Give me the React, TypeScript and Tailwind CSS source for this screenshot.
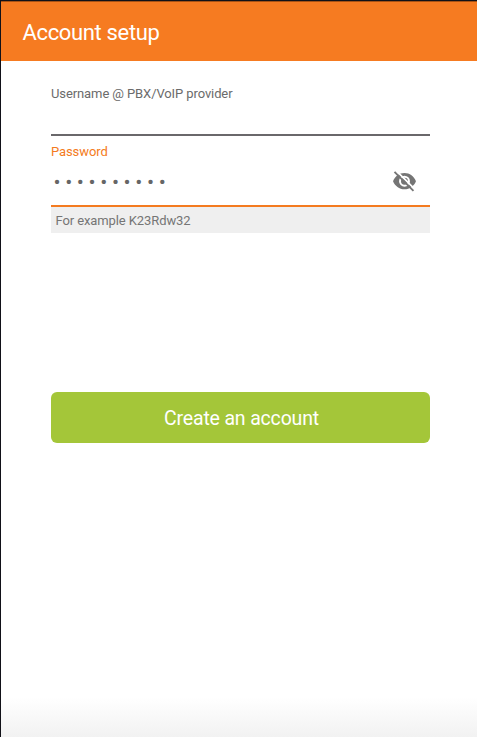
interface FieldLabelProps {
    text: string;
    active?: boolean;
}

function FieldLabel({ text, active }: FieldLabelProps) {
    return (
        <div className={`text-[13px] leading-4 tracking-[-0.1px] ${active ? "text-[#f47b20]" : "text-[#6b6b6b]"}`}>
            {text}
        </div>
    );
}

function HiddenIcon() {
    return (
        <svg viewBox="0 0 24 24" className="size-[25px]" fill="none">
            <path
                d="M12 3.9C7 3.9 2.73 7.3 1 11.7c1.73 4.4 6 7.8 11 7.8s9.27-3.4 11-7.8c-1.73-4.4-6-7.8-11-7.8z"
                fill="#757575"
            />
            <circle cx="12" cy="11.7" r="4.3" stroke="white" strokeWidth="1.9" />
            <path d="M4.2 1.8l17.6 17.6" stroke="white" strokeWidth="1.7" />
            <path d="M2.4 2.8l18.2 18.2" stroke="#757575" strokeWidth="1.8" />
        </svg>
    );
}

export default function App() {
    return (
        <div className="flex h-[737px] w-[477px] flex-col overflow-hidden border-t border-l border-[#111118] bg-white font-[Roboto,sans-serif]">
            <header className="flex h-[60px] shrink-0 items-center border-t border-[#a85214] bg-[#f67b21] pl-[21.5px] pt-0.5">
                <h1 className="text-[22px] tracking-[-0.35px] text-white">Account setup</h1>
            </header>

            <main className="flex grow flex-col pl-[50px] pr-[47px] pt-[25px]">
                <div className="h-[50px] border-b-2 border-[#6a686b]">
                    <FieldLabel text="Username @ PBX/VoIP provider" />
                </div>

                <div className="mt-2 h-[63px] border-b-2 border-[#f47b20]">
                    <FieldLabel text="Password" active />
                    <div className="mt-[7px] flex h-7 items-center justify-between pl-[2.5px] pr-[13px]">
                        <span className="pt-px text-[21px] leading-7 tracking-[4.6px] text-[#666666]">••••••••••</span>
                        <HiddenIcon />
                    </div>
                </div>
                <div className="h-[26px] bg-[#efefef] pl-[4.5px] text-[13px] leading-[28px] tracking-[-0.1px] text-[#757575]">
                    For example K23Rdw32
                </div>

                <button className="mt-[159px] h-[51px] shrink-0 rounded-md bg-[#a4c639] pl-0.5 pt-[3px] text-[19.5px] tracking-[-0.17px] text-white">
                    Create an account
                </button>
            </main>

            <div className="h-10 shrink-0 bg-linear-to-b from-white to-[#f2f2f2]" />
        </div>
    );
}
